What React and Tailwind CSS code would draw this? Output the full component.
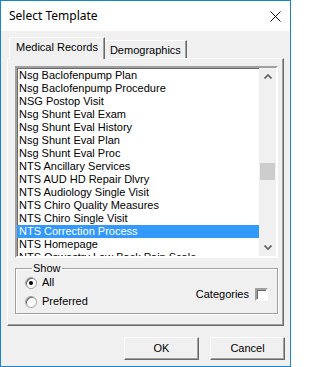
import { useState } from "react";

const items = [
  "Nsg Baclofenpump Plan",
  "Nsg Baclofenpump Procedure",
  "NSG Postop Visit",
  "Nsg Shunt Eval Exam",
  "Nsg Shunt Eval History",
  "Nsg Shunt Eval Plan",
  "Nsg Shunt Eval Proc",
  "NTS Ancillary Services",
  "NTS AUD HD Repair Dlvry",
  "NTS Audiology Single Visit",
  "NTS Chiro Quality Measures",
  "NTS Chiro Single Visit",
  "NTS Correction Process",
  "NTS Homepage",
  "NTS Oswestry Low Back Pain Scale",
];

function Chevron({ up }) {
  return (
    <svg width="8" height="5" viewBox="0 0 8 5">
      <path
        d={up ? "M0.5 4.5 L4 1 L7.5 4.5" : "M0.5 0.5 L4 4 L7.5 0.5"}
        fill="none"
        stroke="#606060"
        strokeWidth="1.6"
      />
    </svg>
  );
}

export default function App() {
  const [selected, setSelected] = useState("NTS Correction Process");
  const [show, setShow] = useState("all");
  const [cats, setCats] = useState(false);

  return (
    <div
      className="w-[291px] h-[367px] border border-[#1883d7] bg-[#f0f0f0] flex flex-col text-[11px] text-black"
      style={{ fontFamily: '"Liberation Sans", Arial, sans-serif' }}
    >
      {/* title bar */}
      <div className="h-[30px] bg-white flex items-center justify-between pl-[8px] pr-[9px] shrink-0">
        <span className="text-[12px]" style={{ fontFamily: '"Noto Sans", sans-serif' }}>
          Select Template
        </span>
        <svg width="11" height="11" viewBox="0 0 11 11">
          <path d="M0.5 0.5 L10.5 10.5 M10.5 0.5 L0.5 10.5" stroke="#111" strokeWidth="1" />
        </svg>
      </div>

      {/* tabs */}
      <div className="mt-[6px] h-[21px] pl-[8px] flex items-end relative z-10">
        <div className="h-[22px] -mb-px px-[6px] pt-[2px] bg-[#f0f0f0] border-t border-l border-white border-r border-r-[#696969] shadow-[inset_-1px_0_0_#a0a0a0] leading-[15px]">
          Medical Records
        </div>
        <div className="h-[18px] px-[5px] pt-[2px] border-t border-white border-r border-r-[#696969] shadow-[inset_-1px_0_0_#a0a0a0] leading-[14px]">
          Demographics
        </div>
      </div>

      {/* tab panel */}
      <div className="ml-[6px] w-[277px] h-[268px] border border-white border-r-[#696969] border-b-[#696969] shadow-[inset_-1px_-1px_0_#a0a0a0] pl-[7px] pt-[7px] flex flex-col">
        {/* listbox */}
        <div className="w-[263px] h-[192px] border-2 border-t-[#a0a0a0] border-l-[#a0a0a0] border-r-white border-b-white shadow-[inset_1px_1px_0_#696969] bg-white flex">
          <div className="flex-1 overflow-hidden pt-[1px]">
            {items.map((it) => (
              <div
                key={it}
                onClick={() => setSelected(it)}
                className={`h-[13px] leading-[13px] pl-[2px] whitespace-nowrap ${
                  selected === it ? "bg-[#3399ff] text-white" : ""
                }`}
              >
                {it}
              </div>
            ))}
          </div>
          <div className="w-[17px] bg-[#f0f0f0] flex flex-col">
            <div className="h-[17px] flex items-center justify-center">
              <Chevron up />
            </div>
            <div className="flex-1">
              <div className="mt-[78px] mx-[1px] h-[17px] bg-[#cdcdcd]" />
            </div>
            <div className="h-[17px] flex items-center justify-center">
              <Chevron />
            </div>
          </div>
        </div>

        {/* show group */}
        <fieldset className="mt-[4px] w-[263px] h-[52px] border border-[#a0a0a0] shadow-[inset_1px_1px_0_white,1px_1px_0_white] px-[9px] flex">
          <legend className="px-[1px] ml-[7px] leading-[12px]">Show</legend>
          <div className="flex w-full justify-between">
            <div className="flex flex-col gap-[6px] pt-[2px]">
              {[
                ["all", "All"],
                ["preferred", "Preferred"],
              ].map(([k, label]) => (
                <label key={k} className="flex items-center gap-[5px] h-[13px]" onClick={() => setShow(k)}>
                  <span className="w-[12px] h-[12px] rounded-full border border-[#a0a0a0] bg-white shadow-[inset_1px_1px_0_#696969] flex items-center justify-center">
                    {show === k && <span className="w-[4px] h-[4px] rounded-full bg-black" />}
                  </span>
                  <span>{label}</span>
                </label>
              ))}
            </div>
            <label className="flex items-center gap-[6px] pt-[6px]" onClick={() => setCats((c) => !c)}>
              <span>Categories</span>
              <span className="w-[13px] h-[13px] border-2 border-t-[#a0a0a0] border-l-[#a0a0a0] border-r-white border-b-white shadow-[inset_1px_1px_0_#696969] bg-white flex items-center justify-center">
                {cats && <span className="text-[9px] leading-none">✓</span>}
              </span>
            </label>
          </div>
        </fieldset>
      </div>

      {/* buttons */}
      <div className="flex justify-end gap-[11px] pr-[5px] mt-[11px]">
        {["OK", "Cancel"].map((b) => (
          <button
            key={b}
            className="w-[75px] h-[23px] bg-[#f0f0f0] border border-t-white border-l-white border-r-[#696969] border-b-[#696969] shadow-[inset_-1px_-1px_0_#a0a0a0] text-[11px]"
          >
            {b}
          </button>
        ))}
      </div>
    </div>
  );
}
